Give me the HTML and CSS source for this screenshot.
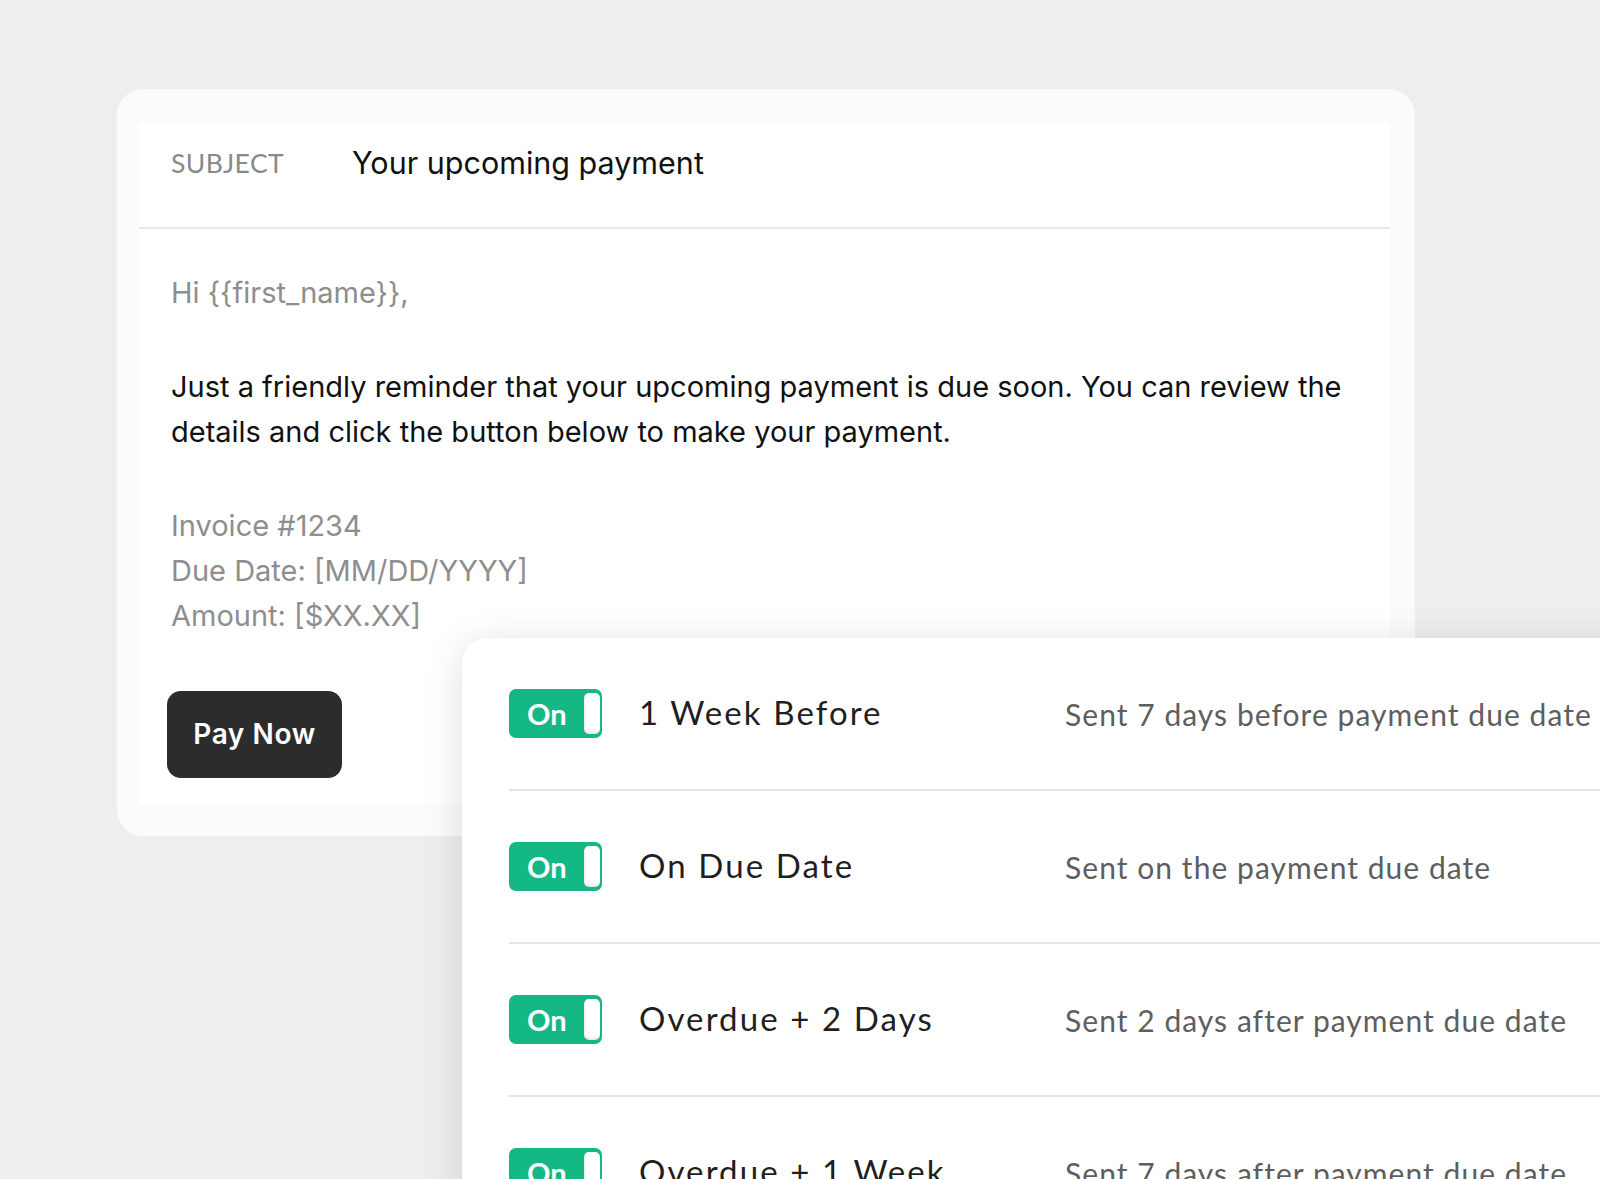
FILE: index.html
```html
<!DOCTYPE html>
<html lang="en">
<head>
    <meta charset="UTF-8">
    <meta name="viewport" content="width=device-width, initial-scale=1.0">
    <title>Payment reminders</title>
    <link rel="stylesheet" href="styles.css">
</head>
<body>
    <div class="scene">
        <div class="email-card">
            <div class="email-inner">
                <div class="subject-row">
                    <span class="subject-label">SUBJECT</span>
                    <span class="subject-text">Your upcoming payment</span>
                </div>
                <div class="email-body">
                    <p class="muted">Hi {{first_name}},</p>
                    <p class="message">Just a friendly reminder that your upcoming payment is due soon. You can review the details and click the button below to make your payment.</p>
                    <p class="muted">Invoice #1234<br>Due Date: [MM/DD/YYYY]<br>Amount: [$XX.XX]</p>
                    <div class="btn-wrap">
                        <a class="pay-btn">Pay Now</a>
                    </div>
                </div>
            </div>
        </div>

        <div class="schedule-card">
            <div class="reminder-row">
                <div class="toggle"><span>On</span><i class="knob"></i></div>
                <div class="reminder-title">1 Week Before</div>
                <div class="reminder-desc">Sent 7 days before payment due date</div>
            </div>
            <div class="reminder-row">
                <div class="toggle"><span>On</span><i class="knob"></i></div>
                <div class="reminder-title">On Due Date</div>
                <div class="reminder-desc">Sent on the payment due date</div>
            </div>
            <div class="reminder-row">
                <div class="toggle"><span>On</span><i class="knob"></i></div>
                <div class="reminder-title">Overdue + 2 Days</div>
                <div class="reminder-desc">Sent 2 days after payment due date</div>
            </div>
            <div class="reminder-row">
                <div class="toggle"><span>On</span><i class="knob"></i></div>
                <div class="reminder-title">Overdue + 1 Week</div>
                <div class="reminder-desc">Sent 7 days after payment due date</div>
            </div>
        </div>
    </div>
</body>
</html>
```

FILE: styles.css
```css
body{
    margin: 0;
    background-color: #efeeec;
    font-family: "Lato", "Noto Sans", sans-serif;
    overflow: hidden;
    height: 1179px;
}
.scene{
    position: relative;
    height: 100%;
    padding-top: 89px;
    box-sizing: border-box;
}

/* email preview */
.email-card{
    margin-left: 117px;
    width: 1298px;
    height: 747px;
    box-sizing: border-box;
    background-color: #fbfbfa;
    border-radius: 26px;
    padding: 34px 25px 0 22px;
    font-family: "Inter", "Lato", sans-serif;
}
.email-inner{
    background-color: #fff;
}
.subject-row{
    display: flex;
    align-items: center;
    padding: 21px 29px 46px 32px;
    border-bottom: 2px solid #e9e9e9;
}
.subject-label{
    width: 181px;
    font-family: "Lato", sans-serif;
    font-size: 26.5px;
    letter-spacing: 0.4px;
    color: #898989;
}
.subject-text{
    font-size: 30.5px;
    color: #111;
}
.email-body{
    padding: 41px 29px 26px 32px;
    font-size: 29px;
    line-height: 45px;
}
.email-body p{
    margin: 0 0 49px 0;
}
.muted{
    color: #8e8e8e;
}
.message{
    color: #111;
    max-width: 1190px;
}
.btn-wrap{
    padding-top: 4px;
}
.pay-btn{
    display: inline-block;
    margin-left: -4px;
    width: 175px;
    height: 87px;
    line-height: 87px;
    text-align: center;
    background-color: #2c2c2c;
    color: #fff;
    border-radius: 14px;
    font-size: 28px;
    font-weight: 600;
    letter-spacing: 0.6px;
}

/* reminder schedule */
.schedule-card{
    position: absolute;
    left: 462px;
    top: 638px;
    width: 1200px;
    height: 700px;
    background-color: #fff;
    border-radius: 26px;
    box-shadow: 0 6px 40px rgba(0,0,0,0.13);
    padding-left: 47px;
    box-sizing: border-box;
}
.reminder-row{
    display: flex;
    align-items: center;
    height: 151px;
    border-bottom: 2px solid #e6e6e6;
}
.toggle{
    position: relative;
    width: 93px;
    height: 49px;
    border-radius: 7px;
    background-color: #14b884;
    color: #fff;
    font-size: 29px;
    font-weight: 700;
    line-height: 49px;
    margin-right: 37px;
    flex-shrink: 0;
}
.toggle span{
    padding-left: 18px;
}
.knob{
    position: absolute;
    right: 2px;
    top: 4px;
    width: 16px;
    height: 41px;
    border-radius: 5px;
    background-color: #fff;
    box-shadow: inset 1px -2px 2px rgba(0,0,0,0.09);
}
.reminder-title{
    width: 426px;
    font-size: 33px;
    letter-spacing: 2.1px;
    color: #1f1f1f;
    flex-shrink: 0;
    margin-top: -3px;
}
.reminder-desc{
    font-size: 30px;
    letter-spacing: 1.05px;
    color: #5e5e5e;
    white-space: nowrap;
}
```
